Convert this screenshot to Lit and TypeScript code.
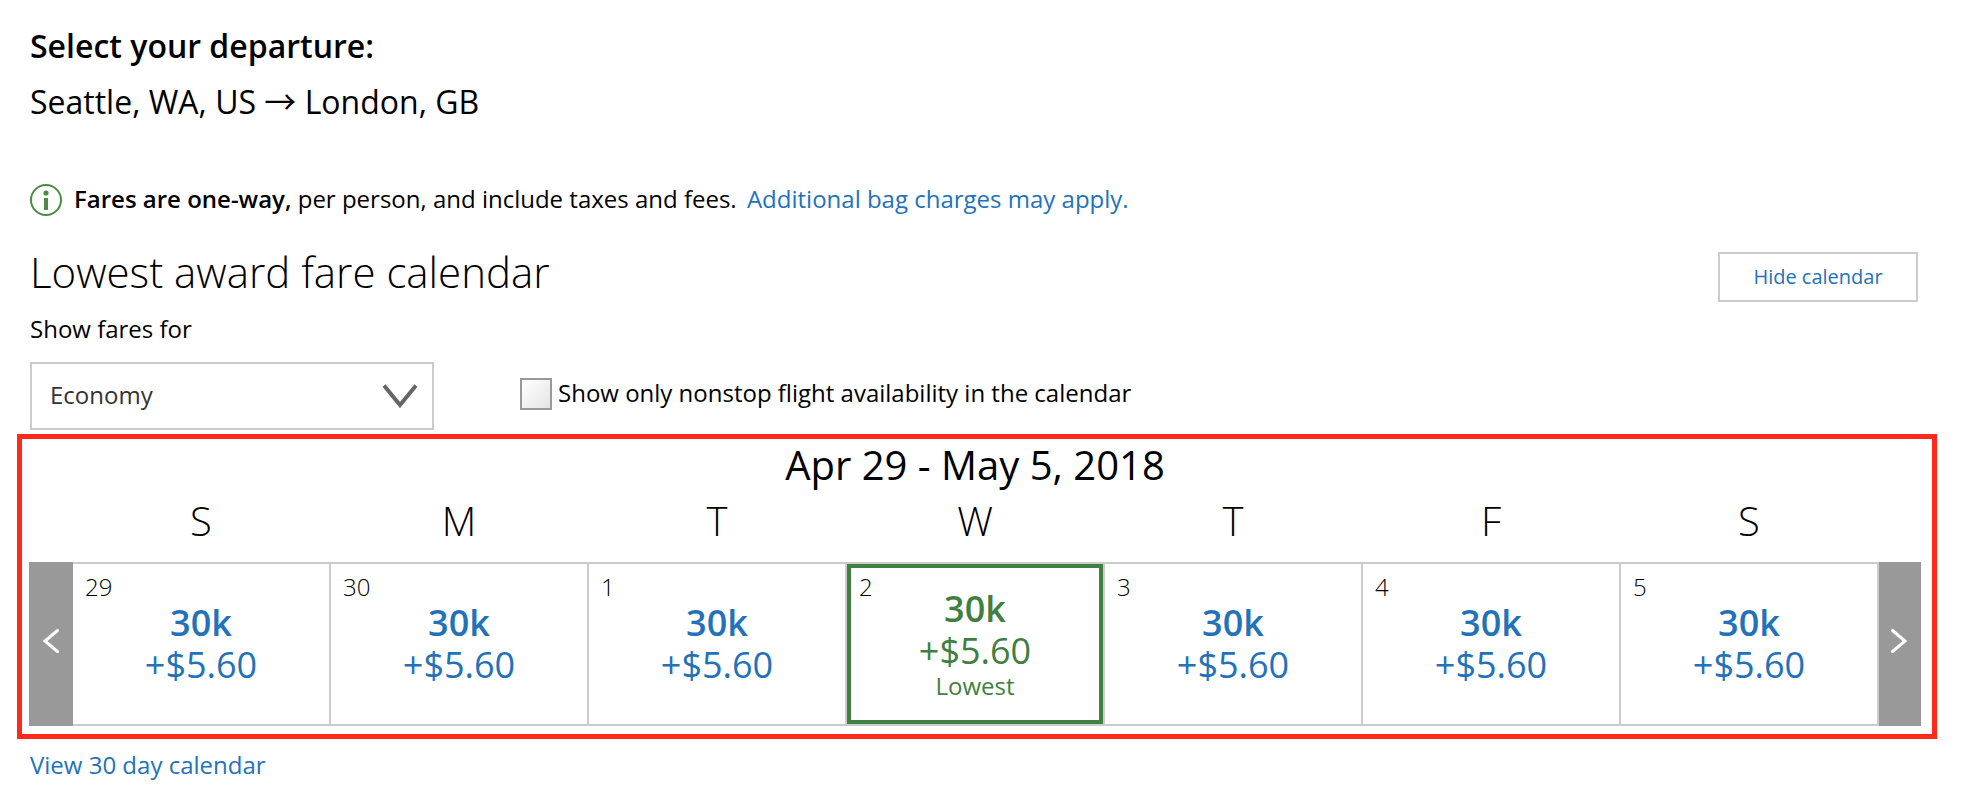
import { LitElement, html, css, nothing } from "lit";
import { customElement, property, state } from "lit/decorators.js";
import { classMap } from "lit/directives/class-map.js";

interface Fare {
  day: number;
  weekday: string;
  miles: string;
  tax: string;
  lowest?: boolean;
}

const WEEK: Fare[] = [
  { day: 29, weekday: "S", miles: "30k", tax: "+$5.60" },
  { day: 30, weekday: "M", miles: "30k", tax: "+$5.60" },
  { day: 1, weekday: "T", miles: "30k", tax: "+$5.60" },
  { day: 2, weekday: "W", miles: "30k", tax: "+$5.60", lowest: true },
  { day: 3, weekday: "T", miles: "30k", tax: "+$5.60" },
  { day: 4, weekday: "F", miles: "30k", tax: "+$5.60" },
  { day: 5, weekday: "S", miles: "30k", tax: "+$5.60" },
];

@customElement("fare-calendar")
class FareCalendar extends LitElement {
  @property({ attribute: false }) week: Fare[] = [];
  @property() range = "";

  static styles = css`
    :host {
      display: flex;
      align-items: flex-end;
      box-sizing: border-box;
      border: 5px solid #ff2a1c;
      padding: 0 11px 8px 7px;
    }
    .week {
      flex: 1;
      min-width: 0;
      table-layout: fixed;
      border-spacing: 0;
    }
    .range {
      padding-right: 2px;
      font-size: 40px;
      line-height: 52px;
      text-align: center;
      white-space: nowrap;
    }
    .weekday {
      padding: 0 2px 11px 0;
      font-size: 40px;
      font-weight: 300;
      line-height: 60px;
      text-align: center;
    }
    .day {
      padding: 0;
      border: solid #ccc;
      border-width: 2px 2px 2px 0;
    }
    .fare {
      display: grid;
      box-sizing: border-box;
      height: 160px;
      color: #2372b9;
      text-decoration: none;
    }
    .fare > * {
      grid-area: 1 / 1;
    }
    .number {
      place-self: start;
      margin: 8px 12px;
      color: #000;
      font-size: 24px;
      font-weight: 300;
      line-height: 30px;
    }
    .price {
      display: flex;
      flex-direction: column;
      place-self: center;
      font-size: 36px;
      line-height: 42px;
      text-align: center;
    }
    .miles {
      font-weight: 600;
    }
    .note {
      font-size: 24px;
      line-height: 28px;
    }
    .lowest {
      color: #3f7f3f;
      box-shadow: inset 0 0 0 4px #3f7f3f;
    }
    .step {
      display: grid;
      place-items: center;
      flex: none;
      box-sizing: border-box;
      width: 44px;
      height: 164px;
      padding: 0 0 6px;
      border: 0;
      background: #999;
      cursor: pointer;
    }
    .next {
      width: 42px;
      padding-right: 2px;
    }
    .arrow {
      fill: none;
      stroke: #fff;
      stroke-width: 3;
      stroke-linecap: round;
    }
  `;

  render() {
    return html`
      <button class="step" aria-label="Previous week">
        <svg class="arrow" width="18" height="26" viewBox="0 0 18 26"><path d="M15.500 2.500 L3 13 L15.500 23.500" /></svg>
      </button>
      <table class="week">
        <caption class="range">${this.range}</caption>
        <thead>
          <tr>${this.week.map((f) => html`<th class="weekday" scope="col">${f.weekday}</th>`)}</tr>
        </thead>
        <tbody>
          <tr>
            ${this.week.map(
              (f) => html`<td class="day">
                <a class=${classMap({ fare: true, lowest: !!f.lowest })} href="#">
                  <span class="number">${f.day}</span>
                  <span class="price">
                    <span class="miles">${f.miles}</span>
                    <span>${f.tax}</span>
                    ${f.lowest ? html`<span class="note">Lowest</span>` : nothing}
                  </span>
                </a>
              </td>`
            )}
          </tr>
        </tbody>
      </table>
      <button class="step next" aria-label="Next week">
        <svg class="arrow" width="18" height="26" viewBox="0 0 18 26"><path d="M2.500 2.500 L15 13 L2.500 23.500" /></svg>
      </button>
    `;
  }
}

@customElement("app-root")
class AppRoot extends LitElement {
  @state() private nonstop = false;

  static styles = css`
    :host {
      display: block;
      padding: 18px 0;
      background: #fff;
      color: #000;
      font-family: "Open Sans", "Noto Sans", sans-serif;
      font-size: 24px;
      line-height: 32px;
    }
    .section {
      padding: 0 46px 0 30px;
    }
    .title,
    .route {
      margin: 0;
      font-size: 32px;
      line-height: 56px;
      font-weight: 600;
    }
    .route {
      font-weight: 400;
    }
    .to {
      font-family: "Noto Sans CJK JP", sans-serif;
      line-height: 32px;
    }
    .info {
      display: flex;
      align-items: flex-start;
      gap: 12px;
      margin: 54px 0 26px;
    }
    .info-text {
      margin: 0;
      line-height: 30px;
    }
    .info-icon {
      flex: none;
    }
    .strong {
      font-weight: 600;
    }
    .link {
      color: #2372b9;
      text-decoration: none;
    }
    .bags {
      margin-left: 4px;
    }
    .head {
      display: flex;
      justify-content: space-between;
      align-items: flex-end;
    }
    .heading {
      margin: 0;
      font-size: 42px;
      font-weight: 300;
      line-height: 60px;
    }
    .hide {
      box-sizing: border-box;
      width: 200px;
      height: 50px;
      padding: 0;
      border: 2px solid #ccc;
      background: #fff;
      color: #2372b9;
      font: inherit;
      font-size: 20px;
      cursor: pointer;
    }
    .cabin-label {
      display: block;
      margin: 11px 0 17px;
    }
    .controls {
      display: flex;
      align-items: center;
      gap: 86px;
      margin-bottom: 4px;
    }
    .cabin {
      display: grid;
      align-items: center;
      width: 404px;
    }
    .cabin > * {
      grid-area: 1 / 1;
    }
    .select {
      appearance: none;
      box-sizing: border-box;
      width: 100%;
      height: 68px;
      padding: 0 60px 2px 18px;
      border: 2px solid #ccc;
      border-radius: 0;
      background: #fff;
      color: #333;
      font: inherit;
    }
    .chevron {
      justify-self: end;
      margin-right: 16px;
      fill: none;
      stroke: #666;
      stroke-width: 4;
      pointer-events: none;
    }
    .nonstop {
      display: flex;
      gap: 6px;
      padding-bottom: 4px;
      line-height: 30px;
    }
    .check {
      appearance: none;
      box-sizing: border-box;
      flex: none;
      width: 32px;
      height: 32px;
      margin: 0;
      border: 2px solid #999;
      background: linear-gradient(135deg, #fff, #e4e4e4);
    }
    .check:checked {
      background: #2372b9;
    }
    .calendar {
      margin: 0 27px 10px 17px;
    }
  `;

  render() {
    return html`
      <main>
        <div class="section">
          <h1 class="title">Select your departure:</h1>
          <p class="route">Seattle, WA, US <span class="to">→</span> London, GB</p>
          <div class="info">
            <svg class="info-icon" width="32" height="32" viewBox="0 0 32 32" aria-hidden="true">
              <circle cx="16" cy="16" r="15" fill="none" stroke="#4a8c43" stroke-width="2" />
              <circle cx="16" cy="9" r="2.600" fill="#4a8c43" />
              <rect x="14" y="14" width="4" height="12" fill="#4a8c43" />
            </svg>
            <p class="info-text">
              <span class="strong">Fares are one-way,</span> per person, and include taxes and fees.
              <a class="link bags" href="#">Additional bag charges may apply.</a>
            </p>
          </div>
          <div class="head">
            <h2 class="heading">Lowest award fare calendar</h2>
            <button class="hide">Hide calendar</button>
          </div>
          <label class="cabin-label" for="cabin">Show fares for</label>
          <div class="controls">
            <div class="cabin">
              <select class="select" id="cabin">
                <option>Economy</option>
                <option>Business</option>
                <option>First</option>
              </select>
              <svg class="chevron" width="36" height="24" viewBox="0 0 36 24" aria-hidden="true">
                <path d="M2 1.500 L18 21 L34 1.500" />
              </svg>
            </div>
            <label class="nonstop">
              <input
                class="check"
                type="checkbox"
                .checked=${this.nonstop}
                @change=${(e: Event) => (this.nonstop = (e.target as HTMLInputElement).checked)}
              />
              <span>Show only nonstop flight availability in the calendar</span>
            </label>
          </div>
        </div>
        <fare-calendar class="calendar" range="Apr 29 - May 5, 2018" .week=${WEEK}></fare-calendar>
        <div class="section">
          <a class="link" href="#">View 30 day calendar</a>
        </div>
      </main>
    `;
  }
}
